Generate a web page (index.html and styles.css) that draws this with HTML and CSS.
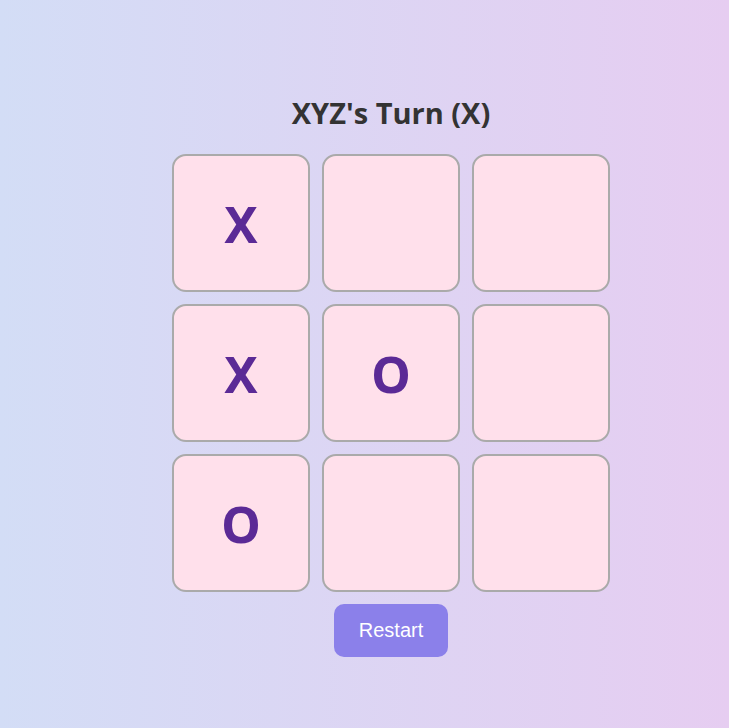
FILE: index.html
```html
<!DOCTYPE html>
<html>
<head>
<meta charset="utf-8">
<link rel="stylesheet" href="styles.css">
</head>
<body>
<main class="game">
  <h1 class="status">XYZ's Turn (X)</h1>
  <div class="board">
    <button class="cell">X</button>
    <button class="cell"></button>
    <button class="cell"></button>
    <button class="cell">X</button>
    <button class="cell">O</button>
    <button class="cell"></button>
    <button class="cell">O</button>
    <button class="cell"></button>
    <button class="cell"></button>
  </div>
  <button class="restart">Restart</button>
</main>
</body>
</html>
```
FILE: styles.css
```css
html, body {
  margin: 0;
  height: 100%;
}
body {
  background: linear-gradient(to right, #d3ddf6, #e6cdf1);
  font-family: "Open Sans", "Noto Sans", sans-serif;
}
.game {
  display: flex;
  flex-direction: column;
  align-items: center;
  padding-top: 93px;
  padding-left: 53px;
}
.status {
  margin: 0 0 21px;
  font-size: 29px;
  font-weight: 700;
  color: #333;
  line-height: 40px;
}
.board {
  display: grid;
  grid-template-columns: repeat(3, 138px);
  grid-auto-rows: 138px;
  gap: 12px;
}
.cell {
  box-sizing: border-box;
  background: #ffe0eb;
  border: 2px solid #aaa;
  border-radius: 14px;
  font-family: "Noto Sans", "Open Sans", sans-serif;
  font-size: 50px;
  font-weight: 700;
  color: #5b2a96;
  padding: 1px 0 0;
  display: flex;
  align-items: center;
  justify-content: center;
}
.restart {
  margin-top: 12px;
  width: 114px;
  height: 53px;
  border: none;
  border-radius: 10px;
  background: #8b80ea;
  color: #fff;
  font-family: "Liberation Sans", Arial, sans-serif;
  font-size: 20px;
}
```
